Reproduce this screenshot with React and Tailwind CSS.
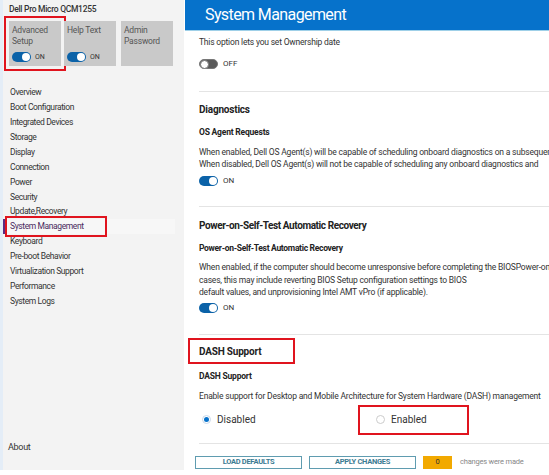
import React from "react";

const navItems = [
  "Overview",
  "Boot Configuration",
  "Integrated Devices",
  "Storage",
  "Display",
  "Connection",
  "Power",
  "Security",
  "Update,Recovery",
  "System Management",
  "Keyboard",
  "Pre-boot Behavior",
  "Virtualization Support",
  "Performance",
  "System Logs",
];

const Toggle = ({ on }) =>
  on ? (
    <div className="w-[19px] h-[10px] rounded-full bg-[#0b62a8] flex items-center justify-end pr-[1px]">
      <div className="w-[8px] h-[8px] rounded-full bg-white" />
    </div>
  ) : (
    <div className="w-[19px] h-[10px] rounded-full bg-[#5a5a5a] border border-[#777] flex items-center">
      <div className="w-[9px] h-[9px] rounded-full bg-white border border-[#777]" />
    </div>
  );

const ToggleRow = ({ on, className }) => (
  <div className={`h-[10px] flex items-center gap-[5px] ${className}`}>
    <Toggle on={on} />
    <span className="text-[8px] leading-[10px] text-[#333]">{on ? "ON" : "OFF"}</span>
  </div>
);

const Tile = ({ label, toggle, boxed }) => (
  <div className={boxed ? "border-2 border-[#e0141e] p-[3px] -m-[5px]" : ""}>
    <div className="w-[52px] h-[45px] bg-[#c9c9c9] px-[3px] pt-[4px] flex flex-col">
      <div className="text-[8.5px] leading-[11px] text-[#555] tracking-[-0.2px]">{label}</div>
      {toggle && (
        <div className="mt-auto mb-[4px] flex items-center gap-[4px]">
          <Toggle on />
          <span className="text-[7px] text-[#333]">ON</span>
        </div>
      )}
    </div>
  </div>
);

export default function App() {
  return (
    <div
      className="w-[549px] h-[475px] flex bg-white overflow-hidden"
      style={{ fontFamily: "Roboto, 'Liberation Sans', sans-serif" }}
    >
      {/* Sidebar */}
      <div className="w-[184px] h-[470px] bg-[#f3f3f3] border-l-[3px] border-[#e4edf7] flex flex-col shrink-0">
        <div className="pl-[6px] pt-[3px] text-[8.5px] leading-[12px] font-medium text-[#333] tracking-[-0.3px]">
          Dell Pro Micro QCM1255
        </div>
        <div className="mt-[6px] pl-[6px] flex gap-[3px]">
          <Tile label={<>Advanced<br />Setup</>} toggle boxed />
          <Tile label="Help Text" toggle />
          <div className="ml-[2px]">
            <Tile label={<>Admin<br />Password</>} />
          </div>
        </div>
        <div className="mt-[19px] flex flex-col">
          {navItems.map((item) =>
            item === "System Management" ? (
              <div key={item} className="h-[14.93px] flex items-center bg-[#f7f7f7] mr-[9px] border-l-2 border-[#5b2d82] relative">
                <div className="absolute left-0 -top-[3px] w-[102px] h-[21px] border-2 border-[#e0141e]" />
                <span className="pl-[5px] text-[8.5px] text-[#4a2a5e] tracking-[-0.4px]">{item}</span>
              </div>
            ) : (
              <div key={item} className="h-[14.93px] flex items-center pl-[7px] text-[8.5px] text-[#333] tracking-[-0.4px]">
                {item}
              </div>
            )
          )}
        </div>
        <div className="mt-auto mb-[16px] pl-[5px] text-[9px] text-[#333] tracking-[-0.3px]">About</div>
      </div>

      {/* Main */}
      <div className="flex-1 flex flex-col ml-[1px] min-w-0">
        <div className="h-[31px] bg-[#0672cb] border-b border-[#9fd0e8] flex items-center pl-[20px] shrink-0">
          <span className="text-[16px] text-white tracking-[-0.6px]">System Management</span>
        </div>
        <div className="flex-1 pl-[14px] overflow-hidden text-[#333]">
          {/* Ownership date */}
          <div className="border-b border-[#e4e4e4] pt-[5px] pb-[22px]">
            <div className="text-[8.5px] leading-[12px] tracking-[-0.2px]">This option lets you set Ownership date</div>
            <ToggleRow className="mt-[11px]" />
          </div>

          {/* Diagnostics */}
          <div className="border-b border-[#e4e4e4] pt-[11px] pb-[20px]">
            <div className="text-[10px] leading-[14px] font-bold text-[#222] tracking-[-0.2px]">Diagnostics</div>
            <div className="mt-[9px] text-[8.5px] leading-[12px] font-bold text-[#222] tracking-[-0.2px]">OS Agent Requests</div>
            <div className="mt-[9px] text-[8.5px] leading-[11.5px] tracking-[-0.2px] whitespace-nowrap">
              <div>When enabled, Dell OS Agent(s) will be capable of scheduling onboard diagnostics on a subsequent boot.</div>
              <div>When disabled, Dell OS Agent(s) will not be capable of scheduling any onboard diagnostics and</div>
            </div>
            <ToggleRow on className="mt-[6px]" />
          </div>

          {/* POST recovery */}
          <div className="border-b border-[#e4e4e4] pt-[12px] pb-[21px]">
            <div className="text-[10px] leading-[14px] font-bold text-[#222] tracking-[-0.4px]">Power-on-Self-Test Automatic Recovery</div>
            <div className="mt-[9px] text-[8.5px] leading-[12px] font-bold text-[#222] tracking-[-0.3px]">Power-on-Self-Test Automatic Recovery</div>
            <div className="mt-[7px] text-[8.5px] leading-[12.5px] tracking-[-0.2px] whitespace-nowrap">
              <div>When enabled, if the computer should become unresponsive before completing the BIOSPower-on-Self-Test, in some</div>
              <div>cases, this may include reverting BIOS Setup configuration settings to BIOS</div>
              <div>default values, and unprovisioning Intel AMT vPro (if applicable).</div>
            </div>
            <ToggleRow on className="mt-[4px]" />
          </div>

          {/* DASH */}
          <div className="border-b border-[#e4e4e4] pb-[8px]">
            <div className="-ml-[11px] mt-[3px] w-[107px] h-[26px] border-2 border-[#e0141e] flex items-center pl-[9px] pt-[3px]">
              <span className="text-[10px] leading-[14px] font-bold text-[#222] tracking-[-0.2px]">DASH Support</span>
            </div>
            <div className="mt-[6px] text-[8.5px] leading-[12px] font-bold text-[#222] tracking-[-0.2px]">DASH Support</div>
            <div className="mt-[8px] text-[8.5px] leading-[12px] tracking-[-0.2px] whitespace-nowrap">
              Enable support for Desktop and Mobile Architecture for System Hardware (DASH) management
            </div>
            <div className="mt-[3px] flex items-center h-[30px]">
              <div className="flex items-center gap-[6px] pl-[3px] w-[159px]">
                <div className="w-[9px] h-[9px] rounded-full border border-[#c8d8ea] bg-white flex items-center justify-center">
                  <div className="w-[5px] h-[5px] rounded-full bg-[#0672cb]" />
                </div>
                <span className="text-[10px] text-[#333]">Disabled</span>
              </div>
              <div className="w-[111px] h-[30px] border-2 border-[#e0141e] flex items-center pl-[16px] gap-[6px]">
                <div className="w-[9px] h-[9px] rounded-full border border-[#ccc] bg-white" />
                <span className="text-[10px] text-[#333]">Enabled</span>
              </div>
            </div>
          </div>

          {/* Footer */}
          <div className="mt-[12px] -ml-[4px] flex items-center gap-[7px]">
            <button className="w-[107px] h-[13px] border border-[#5f9cb0] text-[7.5px] font-bold text-[#3c7b92] tracking-[-0.3px] flex items-center justify-center">
              LOAD DEFAULTS
            </button>
            <button className="w-[107px] h-[13px] border border-[#5f9cb0] text-[7.5px] font-bold text-[#3c7b92] tracking-[-0.3px] flex items-center justify-center">
              APPLY CHANGES
            </button>
            <div className="w-[29px] h-[13px] bg-[#f2a900] text-[7.5px] text-[#333] flex items-center justify-center">0</div>
            <span className="ml-[1px] text-[7.5px] text-[#888] tracking-[-0.2px]">changes were made</span>
          </div>
        </div>
      </div>
    </div>
  );
}
